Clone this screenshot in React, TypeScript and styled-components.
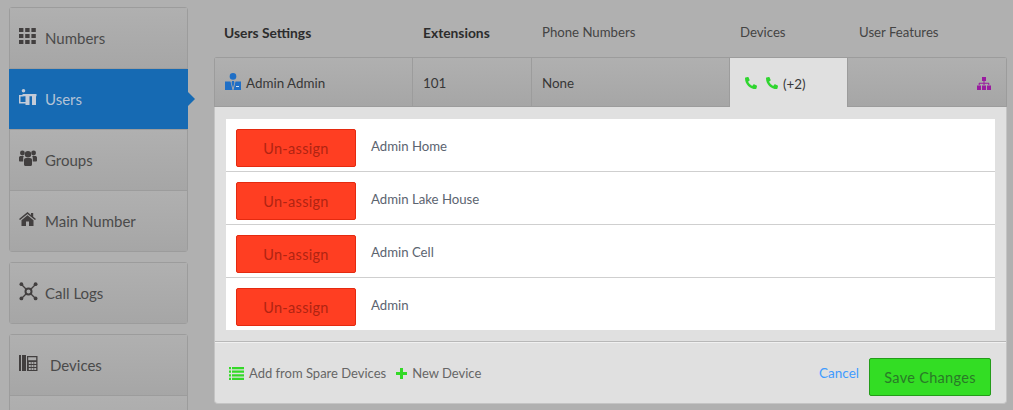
import React from "react";
import styled, { createGlobalStyle } from "styled-components";
import { FaPhoneAlt } from "react-icons/fa";

const GlobalStyle = createGlobalStyle`
  html, body {
    margin: 0;
    padding: 0;
    height: 410px;
    overflow: hidden;
    background: #b0b0b0;
    font-family: Lato, "Noto Sans", sans-serif;
  }
`;

const Page = styled.div`
  display: flex;
  align-items: flex-start;
  height: 410px;
  padding: 7px 6px 0 9px;
  box-sizing: border-box;
  overflow: hidden;
`;

const Sidebar = styled.nav`
  width: 179px;
  flex: none;
  display: flex;
  flex-direction: column;
  gap: 10px;
  margin-right: 26px;
`;

const NavGroup = styled.div`
  border: 1px solid #9c9c9c;
  border-radius: 3px;
  display: flex;
  flex-direction: column;
`;

const NavItem = styled.div<{ $active?: boolean }>`
  position: relative;
  height: 61px;
  box-sizing: border-box;
  margin: ${(p) => (p.$active ? "0 -1px" : "0")};
  display: flex;
  align-items: center;
  padding-left: ${(p) => (p.$active ? "10px" : "9px")};
  gap: 8px;
  font-size: 15px;
  color: ${(p) => (p.$active ? "#b4c3d6" : "#4a4a4a")};
  background: ${(p) => (p.$active ? "#166ab3" : "linear-gradient(#b0b0b0, #a6a6a6)")};
  & + & {
    border-top: 1px solid #9c9c9c;
  }
  &:first-child {
    height: 60px;
  }
  ${(p) =>
    p.$active &&
    `&::after {
      content: "";
      position: absolute;
      left: 100%;
      top: 50%;
      margin-top: -7px;
      border-left: 7px solid #166ab3;
      border-top: 7px solid transparent;
      border-bottom: 7px solid transparent;
    }`}
`;

const NavIcon = styled.span<{ $wide?: boolean }>`
  width: ${(p) => (p.$wide ? "23px" : "18px")};
  height: 18px;
  margin-top: -4px;
  display: flex;
  align-items: center;
  flex: none;
  svg {
    display: block;
    flex: none;
  }
`;

const Main = styled.main`
  width: 793px;
  flex: none;
`;

const HeaderRow = styled.div`
  display: grid;
  grid-template-columns: 199px 119px 198px 119px 158px;
  height: 50px;
`;

const HeaderCell = styled.div<{ $bold?: boolean }>`
  padding-left: 10px;
  padding-top: 17px;
  font-size: ${(p) => (p.$bold ? "13.8px" : "13.2px")};
  font-weight: ${(p) => (p.$bold ? 700 : 400)};
  color: ${(p) => (p.$bold ? "#2c2c2c" : "#444")};
`;

const SummaryRow = styled.div`
  display: grid;
  grid-template-columns: 198px 119px 198px 117px 159px;
  height: 50px;
  box-sizing: border-box;
  border: 1px solid #9c9c9c;
  border-bottom: 0;
  border-radius: 3px 3px 0 0;
  font-size: 13.4px;
  color: #373737;
`;

const SummaryCell = styled.div<{ $open?: boolean; $end?: boolean }>`
  display: flex;
  align-items: center;
  justify-content: ${(p) => (p.$end ? "flex-end" : "flex-start")};
  gap: 5px;
  padding: 2px ${(p) => (p.$end ? "15px" : "10px")} 0 ${(p) => (p.$open ? "15px" : "10px")};
  border-right: ${(p) => (p.$end || p.$open ? "0" : "1px solid #9c9c9c")};
  border-bottom: ${(p) => (p.$open ? "0" : "1px solid #9c9c9c")};
  background: ${(p) => (p.$open ? "#e0e0e0" : "linear-gradient(#b0b0b0, #a6a6a6)")};
  border-left: ${(p) => (p.$end ? "1px solid #9c9c9c" : "0")};
`;

const PhoneIcon = styled(FaPhoneAlt)`
  color: #2fd52f;
  font-size: 12px;
  margin: -1px 4px 0 0;
  &:last-of-type {
    margin-right: 0;
  }
`;

const Panel = styled.section`
  background: #e0e0e0;
  border: 1px solid #c4c4c4;
  border-top: 0;
  border-radius: 0 0 4px 4px;
  height: 297px;
  box-sizing: border-box;
  padding-top: 12px;
`;

const DeviceList = styled.div`
  background: #fff;
  margin: 0 11px;
  height: 211px;
  display: flex;
  flex-direction: column;
`;

const DeviceRow = styled.div`
  height: 53px;
  box-sizing: border-box;
  display: flex;
  padding: 10px 0 0 10px;
  gap: 15px;
  font-size: 13.2px;
  color: #5c6470;
  & + & {
    border-top: 1px solid #cfcfcf;
  }
  &:first-child {
    height: 52px;
  }
`;

const DeviceName = styled.span`
  line-height: 34px;
  height: 34px;
`;

const UnassignButton = styled.button`
  width: 120px;
  height: 38px;
  flex: none;
  padding: 0;
  background: #ff3e22;
  border: 1px solid #e42a10;
  border-radius: 2px;
  color: #b02412;
  font: inherit;
  font-size: 14.5px;
  letter-spacing: 0.3px;
`;

const Footer = styled.footer`
  margin-top: 11px;
  border-top: 1px solid #b8b8b8;
  box-shadow: inset 0 1px 0 #f0f0f0;
  display: flex;
  align-items: flex-start;
  padding: 16px 15px 0 14px;
  font-size: 13px;
  color: #666;
`;

const FooterLink = styled.span`
  display: flex;
  align-items: center;
  gap: 5px;
  margin-top: 7px;
  margin-right: 10px;
`;

const CancelLink = styled.span`
  color: #3f9bff;
  font-size: 13.5px;
  margin-left: auto;
  margin-right: 10px;
  margin-top: 7px;
`;

const SaveButton = styled.button`
  width: 122px;
  height: 38px;
  padding: 0;
  background: #33dd24;
  border: 1px solid #239c19;
  border-radius: 2px;
  color: #2a7a28;
  font: inherit;
  font-size: 14.5px;
  letter-spacing: 0.3px;
`;

const GridGlyph = () => (
  <svg width="17" height="16" viewBox="0 0 17 16" fill="#423f3f">
    <path d="M0 0h4.4v4H0zM6.2 0h4.4v4H6.2zM12.4 0h4.4v4h-4.4zM0 6h4.4v4H0zM6.2 6h4.4v4H6.2zM12.4 6h4.4v4h-4.4zM0 12h4.4v4H0zM6.2 12h4.4v4H6.2zM12.4 12h4.4v4h-4.4z" />
  </svg>
);

const UsersGlyph = () => (
  <svg width="18" height="17" viewBox="0 0 18 17" fill="#c3cbd8">
    <circle cx="4.5" cy="1.8" r="1.8" />
    <path d="M0 6h4.500v1.500H1.500V13H6.500v1.500H0zM3.500 5h14v2.200h-14zM6.500 7.200h4V16h-4zM13 7.200h4V16h-4z" />
  </svg>
);

const GroupsGlyph = () => (
  <svg width="18" height="16" viewBox="0 0 18 16" fill="#423f3f">
    <circle cx="3.4" cy="3" r="2.4" />
    <circle cx="14.6" cy="3" r="2.4" />
    <circle cx="9" cy="4.2" r="3.2" />
    <path d="M0 7.600C0 6.600.8 6 1.800 6H4.800c-.5.8-.6 1.600-.6 2.600v3H1.200C.4 11.600 0 11 0 10.400zM18 7.600C18 6.600 17.200 6 16.200 6H13.200c.5.8.6 1.600.6 2.600v3h3c.8 0 1.200-.6 1.200-1.200z" />
    <path d="M7 8h4c1.200 0 2 .8 2 2v4.500c0 .8-.6 1.500-1.500 1.500h-5C5.600 16 5 15.300 5 14.500V10c0-1.200.8-2 2-2z" />
  </svg>
);

const HomeGlyph = () => (
  <svg width="17" height="14" viewBox="0 0 17 14" fill="#423f3f">
    <path d="M8.500 0L12 2.900V1h2.200v3.700L17 7l-1 1.100-7.500-6.200L1 8.100 0 7z" />
    <path d="M8.500 3.300L14.500 8.300V14H10V9.500H7V14H2.500V8.300z" />
  </svg>
);

const CallLogsGlyph = () => (
  <svg width="19" height="19" viewBox="0 0 19 19" fill="none" stroke="#423f3f">
    <circle cx="9.5" cy="9.5" r="3" strokeWidth="2" />
    <path d="M2.500 2.500l4.500 4.500M16.500 2.500L12 7M2.500 16.500L7 12M16.500 16.500L12 12" strokeWidth="1.4" />
    <g fill="#423f3f" stroke="none">
      <circle cx="2.4" cy="2.2" r="1.9" />
      <circle cx="16.6" cy="2.2" r="1.9" />
      <circle cx="2.4" cy="16.4" r="1.9" />
      <circle cx="16.6" cy="16.4" r="1.9" />
    </g>
  </svg>
);

const DevicesGlyph = () => (
  <svg width="19" height="16" viewBox="0 0 19 16" fill="#423f3f">
    <path d="M0 0h2v16H0zM3 0h4v16H3z" />
    <path
      fillRule="evenodd"
      d="M8 1h10.500v15H8zM9.200 2.200v3h8v-3zM9.800 7v2h2v-2zM12.500 7v2h2v-2zM15.200 7v2h2v-2zM9.800 10v2h2v-2zM12.500 10v2h2v-2zM15.200 10v2h2v-2zM9.800 13v2h2v-2zM12.500 13v2h2v-2zM15.200 13v2h2v-2z"
    />
  </svg>
);

const AdminGlyph = () => (
  <svg width="16" height="17" viewBox="0 0 16 17" fill="#1f6fc6" style={{ marginTop: -4 }}>
    <circle cx="8" cy="3.4" r="3.3" />
    <path d="M0 8.500h5.500L7.500 17H0zM10.500 8.500H16V17H8.500zM7 8h2l.4 2-1.400 5-1.400-5z" />
    <path d="M11 13h3v1h-3z" fill="#cfe0f2" />
  </svg>
);

const SitemapGlyph = () => (
  <svg width="14" height="13" viewBox="0 0 14 13" fill="#9a1ba0">
    <path d="M5 0h4v4H5zM6.500 4h1v2.500h-1zM2 5.800h10v1H2zM1.700 6h1v2h-1zM11.300 6h1v2h-1zM6.500 6h1v2h-1z" />
    <path d="M0 8.500h4V13H0zM5 8.500h4V13H5zM10 8.500h4V13h-4z" />
  </svg>
);

const ListGlyph = () => (
  <svg width="15" height="13" viewBox="0 0 15 13" fill="#33d927">
    <path d="M0 0h2v2.200H0zM3 0h12v2.200H3zM0 3.600h2v2.200H0zM3 3.600h12v2.200H3zM0 7.200h2v2.200H0zM3 7.200h12v2.200H3zM0 10.800h2V13H0zM3 10.800h12V13H3z" />
  </svg>
);

const PlusGlyph = () => (
  <svg width="11" height="11" viewBox="0 0 11 11" fill="#33d927">
    <path d="M4 0h3v4h4v3H7v4H4V7H0V4h4z" />
  </svg>
);

const devices = ["Admin Home", "Admin Lake House", "Admin Cell", "Admin"];

const App = () => {
  return (
    <>
      <GlobalStyle />
      <Page>
        <Sidebar>
          <NavGroup>
            <NavItem>
              <NavIcon><GridGlyph /></NavIcon>
              Numbers
            </NavItem>
            <NavItem $active>
              <NavIcon><UsersGlyph /></NavIcon>
              Users
            </NavItem>
            <NavItem>
              <NavIcon><GroupsGlyph /></NavIcon>
              Groups
            </NavItem>
            <NavItem>
              <NavIcon><HomeGlyph /></NavIcon>
              Main Number
            </NavItem>
          </NavGroup>
          <NavGroup>
            <NavItem>
              <NavIcon><CallLogsGlyph /></NavIcon>
              Call Logs
            </NavItem>
          </NavGroup>
          <NavGroup>
            <NavItem>
              <NavIcon $wide><DevicesGlyph /></NavIcon>
              Devices
            </NavItem>
            <NavItem />
          </NavGroup>
        </Sidebar>
        <Main>
          <HeaderRow>
            <HeaderCell $bold>Users Settings</HeaderCell>
            <HeaderCell $bold>Extensions</HeaderCell>
            <HeaderCell>Phone Numbers</HeaderCell>
            <HeaderCell>Devices</HeaderCell>
            <HeaderCell>User Features</HeaderCell>
          </HeaderRow>
          <SummaryRow>
            <SummaryCell>
              <AdminGlyph />
              Admin Admin
            </SummaryCell>
            <SummaryCell>101</SummaryCell>
            <SummaryCell>None</SummaryCell>
            <SummaryCell $open>
              <PhoneIcon />
              <PhoneIcon />
              (+2)
            </SummaryCell>
            <SummaryCell $end>
              <SitemapGlyph />
            </SummaryCell>
          </SummaryRow>
          <Panel>
            <DeviceList>
              {devices.map((name) => (
                <DeviceRow key={name}>
                  <UnassignButton>Un-assign</UnassignButton>
                  <DeviceName>{name}</DeviceName>
                </DeviceRow>
              ))}
            </DeviceList>
            <Footer>
              <FooterLink>
                <ListGlyph />
                Add from Spare Devices
              </FooterLink>
              <FooterLink>
                <PlusGlyph />
                New Device
              </FooterLink>
              <CancelLink>Cancel</CancelLink>
              <SaveButton>Save Changes</SaveButton>
            </Footer>
          </Panel>
        </Main>
      </Page>
    </>
  );
};

export default App;
